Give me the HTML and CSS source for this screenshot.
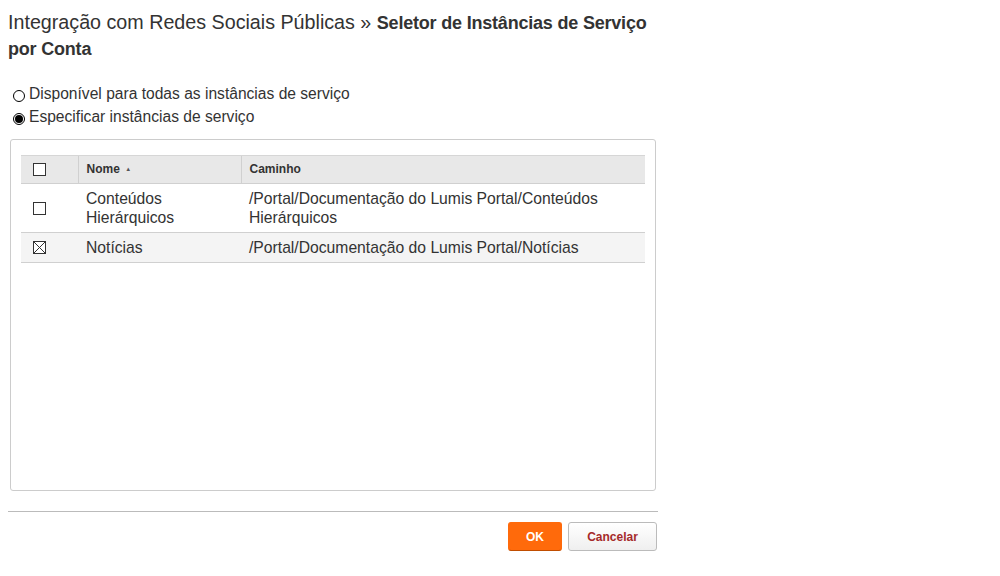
FILE: index.html
```html
<!DOCTYPE html>
<html lang="pt">
<head>
<meta charset="utf-8">
<title>Seletor de Instâncias de Serviço por Conta</title>
<link rel="stylesheet" href="styles.css">
</head>
<body>
<div class="page">
  <h1 class="title">Integração com Redes Sociais Públicas » <strong>Seletor de Instâncias de Serviço por Conta</strong></h1>

  <div class="options">
    <label class="option"><span class="radio"></span>Disponível para todas as instâncias de serviço</label>
    <label class="option"><span class="radio checked"></span>Especificar instâncias de serviço</label>
  </div>

  <div class="panel">
    <table class="grid">
      <thead>
        <tr>
          <th class="col-check"><span class="box"></span></th>
          <th class="col-name">Nome <span class="sort">&#9650;</span></th>
          <th class="col-path">Caminho</th>
        </tr>
      </thead>
      <tbody>
        <tr>
          <td class="col-check"><span class="box"></span></td>
          <td>Conteúdos<br>Hierárquicos</td>
          <td>/Portal/Documentação do Lumis Portal/Conteúdos<br>Hierárquicos</td>
        </tr>
        <tr class="alt">
          <td class="col-check"><span class="box checked"><svg viewBox="0 0 13 13" width="13" height="13"><path d="M1 1L12 12M12 1L1 12" stroke="#333" stroke-width="1" fill="none"/></svg></span></td>
          <td>Notícias</td>
          <td>/Portal/Documentação do Lumis Portal/Notícias</td>
        </tr>
      </tbody>
    </table>
  </div>

  <div class="footer">
    <button class="btn btn-ok">OK</button>
    <button class="btn btn-cancel">Cancelar</button>
  </div>
</div>
</body>
</html>
```

FILE: styles.css
```css
html, body {
  margin: 0;
  padding: 0;
  background: #fff;
}
body {
  padding: 8px;
  font-family: "Liberation Sans", Arial, sans-serif;
  color: #333;
}
.page {
  width: 650px;
}
.title {
  margin: 1px 0 0;
  font-size: 19.7px;
  line-height: 26px;
  font-weight: normal;
  color: #333;
}
.title strong {
  font-weight: bold;
  font-size: 18px;
  line-height: 18px;
  letter-spacing: -0.2px;
}
.options {
  margin-top: 21px;
  display: flex;
  flex-direction: column;
}
.option {
  display: flex;
  align-items: center;
  font-size: 15.6px;
  line-height: 23px;
  height: 23px;
  color: #333;
  padding-left: 5px;
}
.radio {
  width: 10px;
  height: 10px;
  border: 1px solid #000;
  border-radius: 50%;
  background: #fff;
  margin-right: 4px;
  margin-top: 5px;
  display: flex;
  align-items: center;
  justify-content: center;
  box-sizing: content-box;
  flex: none;
}
.radio.checked::after {
  content: "";
  width: 8px;
  height: 8px;
  border-radius: 50%;
  background: #000;
}
.panel {
  margin: 11px 2px 0;
  height: 352px;
  box-sizing: border-box;
  border: 1px solid #ccc;
  border-radius: 3px;
  padding: 15px 10px 0;
}
.grid {
  width: 100%;
  border-collapse: collapse;
  font-size: 15.7px;
  line-height: 19px;
  color: #333;
}
.grid th {
  background: #e8e8e8;
  height: 28px;
  padding: 0 0 0 8px;
  text-align: left;
  font-size: 12px;
  font-weight: bold;
  color: #333;
  border-top: 1px solid #d6d6d6;
  border-bottom: 1px solid #d0d0d0;
  border-left: 1px solid #d0d0d0;
  box-sizing: border-box;
  vertical-align: middle;
}
.grid th:first-child {
  border-left: none;
}
.grid td {
  padding: 5px 8px 5px 8px;
  border-bottom: 1px solid #d0d0d0;
  vertical-align: middle;
}
.grid tr.alt td {
  background: #f4f4f4;
}
.col-check {
  width: 57px;
  box-sizing: border-box;
}
.grid th.col-check, .grid td.col-check {
  padding: 0 0 0 12px;
}
.col-name {
  width: 163px;
  box-sizing: border-box;
}
.box {
  display: block;
  width: 13px;
  height: 13px;
  border: 1px solid #333;
  background: #fff;
  box-sizing: border-box;
  position: relative;
}
.box.checked svg {
  display: block;
  position: absolute;
  left: -1px;
  top: -1px;
}
.sort {
  font-size: 6px;
  color: #555;
  vertical-align: 2px;
  margin-left: 2px;
}
.footer {
  margin-top: 20px;
  border-top: 1px solid #bbb;
  padding-top: 10px;
  display: flex;
  justify-content: flex-end;
  gap: 6px;
  padding-right: 1px;
}
.btn {
  height: 29px;
  font-family: "Liberation Sans", Arial, sans-serif;
  font-size: 12px;
  font-weight: bold;
  border-radius: 3px;
  padding: 0;
  cursor: pointer;
}
.btn-ok {
  width: 54px;
  background: #ff6a0b;
  color: #fff;
  border: 1px solid #ff6a0b;
  border-bottom: 1px solid #c04d00;
}
.btn-cancel {
  width: 89px;
  background: linear-gradient(#ffffff, #efefef);
  color: #a52a2a;
  border: 1px solid #bbb;
}
```
